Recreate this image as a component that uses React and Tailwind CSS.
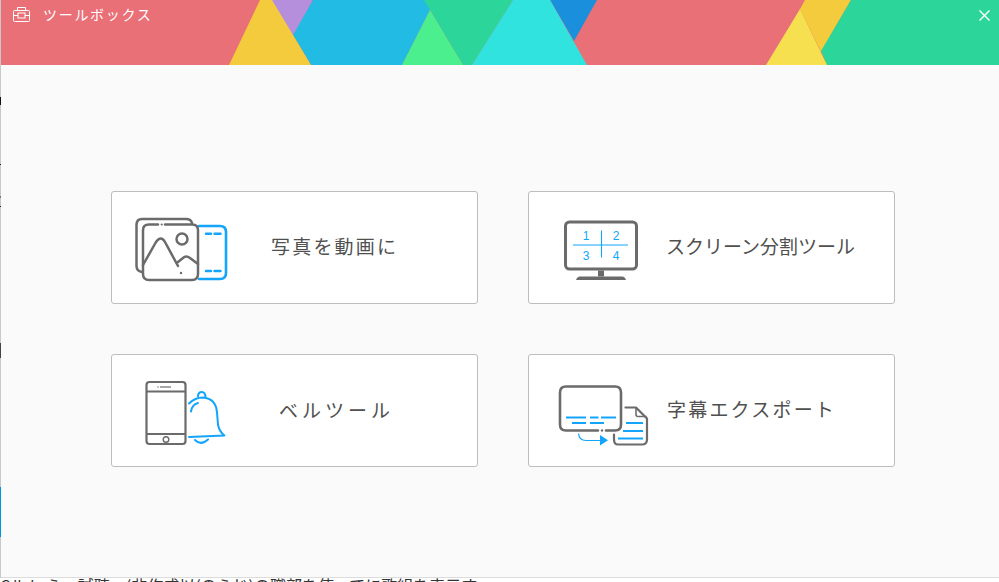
const gray = "#6b6b6b";
const blue = "#12a5fb";

function PhotoIcon() {
  return (
    <svg width="105" height="75" viewBox="130 210 105 75" fill="none" className="shrink-0">
      <g stroke={blue} strokeWidth="2.600" strokeLinecap="round">
        <path d="M199,226 H220 Q226,226 226,232 V273 Q226,279 220,279 H199" />
        <path d="M206,233.700 H211 M214.500,233.700 H220.500 M206,271 H211 M214.500,271 H220.500" strokeWidth="2.400" />
      </g>
      <g stroke={gray} strokeWidth="2.500" strokeLinecap="round" strokeLinejoin="round">
        <path d="M142,272 Q136.500,271 136.500,266 V225 Q136.500,219 142,219 H186 Q191,219 192,223" />
        <path d="M158,224.500 H149 Q143,224.500 143,230 V274 Q143,280 149,280 H192 Q198,280 198,274 V230 Q198,224.500 192,224.500 H165" />
        <circle cx="182" cy="239" r="5.500" />
        <path d="M143,265 L156,242 Q161,235 165,242 L178,266" />
        <path d="M178,262 L183,258 Q186,255 190,258 L198,264" />
      </g>
      <circle cx="161.700" cy="224.500" r="1.100" fill={gray} />
      <circle cx="181" cy="273" r="1.200" fill={gray} />
    </svg>
  );
}

function ScreenIcon() {
  return (
    <svg width="85" height="70" viewBox="560 212.500 85 70" fill="none" className="shrink-0">
      <rect x="565.500" y="221.500" width="71" height="47" rx="4" stroke={gray} strokeWidth="3" />
      <path d="M598,270 H604 V276 H598 Z" fill={gray} />
      <path d="M576,279.500 Q577,276 580,276 H622 Q625,276 626,279.500 Z" fill={gray} />
      <path d="M573,244.500 H628 M601.500,230 V257" stroke={blue} strokeWidth="1.100" />
      <g fill={blue} fontSize="12" textAnchor="middle" fontFamily="'Liberation Sans', sans-serif">
        <text x="586" y="239">1</text>
        <text x="616" y="239">2</text>
        <text x="586" y="259">3</text>
        <text x="616" y="259">4</text>
      </g>
    </svg>
  );
}

function BellIcon() {
  return (
    <svg width="90" height="70" viewBox="140 375.500 90 70" fill="none" className="shrink-0">
      <g stroke={gray}>
        <rect x="146.500" y="381.500" width="39" height="62" rx="3" strokeWidth="2.200" />
        <path d="M147,391 H185 M147,433.500 H185" strokeWidth="1.800" />
        <path d="M160,386.500 H171" strokeWidth="1.200" />
        <circle cx="166" cy="439" r="2.800" strokeWidth="1.400" />
      </g>
      <circle cx="158" cy="386.500" r="0.700" fill={gray} />
      <g stroke={blue} strokeWidth="2" strokeLinecap="round" strokeLinejoin="round">
        <path d="M189,403 Q195,397 203,397 Q216,398 217,412 L218,424 Q219,431 224.500,435 L189,436.500" />
        <path d="M198,396 Q198,391.500 201.800,391.500 Q205.500,391.500 205.500,397" />
        <path d="M191,411 Q192,404 198,402.500" />
        <path d="M195,439.500 Q201,445.500 208,439" />
      </g>
    </svg>
  );
}

function SubtitleIcon() {
  return (
    <svg width="95" height="70" viewBox="555 375.500 95 70" fill="none" className="shrink-0">
      <g stroke={gray} strokeLinecap="round" strokeLinejoin="round">
        <path d="M598,430 H566 Q560,430 560,424 V392 Q560,386 566,386 H615 Q621,386 621,392 V424 Q621,430 615,430 H606" strokeWidth="2.600" />
        <path d="M625.500,407 H636 L647,418 V439 Q647,444 642,444 H618 Q614,444 614,439 V434" strokeWidth="2.200" />
        <path d="M636,407.500 V414 Q636,416 638,416 H646" strokeWidth="1.600" />
      </g>
      <circle cx="602" cy="430" r="1.200" fill={gray} />
      <g stroke={blue} strokeWidth="2">
        <path d="M566,417 H586 M590,417 H598.500 M601,417 H616" />
        <path d="M572,422.500 H586 M590,422.500 H604" />
        <path d="M626,422.500 H643 M623,430.500 H643 M618,438 H643" />
      </g>
      <path d="M578.500,433 Q579,440 586,440 H600" stroke={blue} strokeWidth="1.200" />
      <path d="M600,434.500 L608,439.800 L600,445 Z" fill={blue} />
    </svg>
  );
}

function HeaderArt() {
  return (
    <svg className="absolute inset-0" width="998" height="65" viewBox="1 0 998 65">
      <rect x="0" y="0" width="999" height="65" fill="#e97077" />
      <polygon points="268,0 313,0 290,42" fill="#b68fdc" />
      <polygon points="313,0 430,0 430,10 402,65 311,65 293,35" fill="#22bbe3" />
      <polygon points="229,65 260,0 272,0 311,65" fill="#f4cb3c" />
      <polygon points="424,0 513,0 472,65 463,65" fill="#2cd59a" />
      <polygon points="430,10 463,65 402,65" fill="#4bef8e" />
      <polygon points="550,0 597,0 574,41" fill="#1a8fdb" />
      <polygon points="513,0 550,0 587,65 472,65" fill="#30e3df" />
      <polygon points="805,0 851,0 821,52 800,9" fill="#f4cb3c" />
      <polygon points="851,0 999,0 999,65 827,65 821,51" fill="#2cd69a" />
      <polygon points="800,9 827,65 766,65" fill="#f7e04f" />
    </svg>
  );
}

const cards = [
  { label: "写真を動画に", icon: <PhotoIcon />, box: "pl-[18px]", text: "ml-[36px] tracking-[2.200px] -mt-[4px]" },
  { label: "スクリーン分割ツール", icon: <ScreenIcon />, box: "pl-[31px]", text: "ml-[21px] tracking-[0px] -mt-[4px]" },
  { label: "ベルツール", icon: <BellIcon />, box: "pl-[28px]", text: "ml-[49px] tracking-[4px] -mt-[2px]" },
  { label: "字幕エクスポート", icon: <SubtitleIcon />, box: "pl-[26px]", text: "ml-[17px] tracking-[2.200px] -mt-[4px]" },
];

export default function App() {
  return (
    <div
      className="w-[999px] h-[582px] overflow-hidden bg-white"
      style={{ fontFamily: "'Noto Sans CJK JP', 'Liberation Sans', sans-serif" }}
    >
      <div className="flex h-[578px] relative z-10">
        <div className="w-px h-full flex flex-col bg-[#c9c9c9]">
          <div className="h-[97px] shrink-0" />
          <div className="h-[8px] shrink-0 bg-[#111111]" />
          <div className="h-[59px] shrink-0" />
          <div className="h-px shrink-0 bg-[#222222]" />
          <div className="h-[31px] shrink-0" />
          <div className="h-[2px] shrink-0 bg-[#777777]" />
          <div className="h-[8px] shrink-0" />
          <div className="h-px shrink-0 bg-[#222222]" />
          <div className="h-[136px] shrink-0" />
          <div className="h-[15px] shrink-0 bg-[#444444]" />
          <div className="h-[129px] shrink-0" />
          <div className="h-[50px] shrink-0 bg-[#0494d4]" />
        </div>
        <div className="flex-1 flex flex-col min-w-0">
          <div className="relative h-[65px] shrink-0 flex items-start justify-between">
            <HeaderArt />
            <div className="relative flex items-center pl-[12px] pt-[5px]">
              <svg width="18" height="16" viewBox="0 0 18 16" fill="none" stroke="#ffffff" strokeWidth="1">
                <rect x="0.500" y="4.500" width="16" height="11" rx="1" />
                <path d="M4.500,4.500 V1.500 H12.500 V4.500" />
                <path d="M0.500,9.500 H5 M12,9.500 H16.500" />
                <rect x="5" y="7" width="7" height="5" />
              </svg>
              <span className="ml-[12px] text-[14px] leading-[18px] tracking-[1.700px] text-white">ツールボックス</span>
            </div>
            <svg className="relative mt-[10px] mr-[9px]" width="11" height="11" viewBox="0 0 11 11" stroke="#ffffff" strokeWidth="1.400">
              <path d="M0.500,0.500 L10.500,10.500 M10.500,0.500 L0.500,10.500" />
            </svg>
          </div>
          <div className="flex-1 bg-[#fafafa] pl-[110px] pt-[126px] border-b border-[#dcdcdc]">
            <div className="grid grid-cols-[367px_367px] grid-rows-[113px_113px] gap-x-[50px] gap-y-[50px]">
              {cards.map((c) => (
                <div key={c.label} className={`bg-white border border-[#bdbdbd] rounded-[3px] flex items-center ${c.box}`}>
                  {c.icon}
                  <span className={`text-[19px] leading-[24px] text-[#505050] whitespace-nowrap ${c.text}`}>
                    {c.label}
                  </span>
                </div>
              ))}
            </div>
          </div>
        </div>
      </div>
      <div className="h-[4px] overflow-hidden">
        <p className="text-[16px] leading-[20px] text-[#333333] whitespace-nowrap -mt-[3px]">
          Cルト ら・試聴・(非作成以(のらじ)の職部を使ってに歌組を表示す
        </p>
      </div>
    </div>
  );
}
